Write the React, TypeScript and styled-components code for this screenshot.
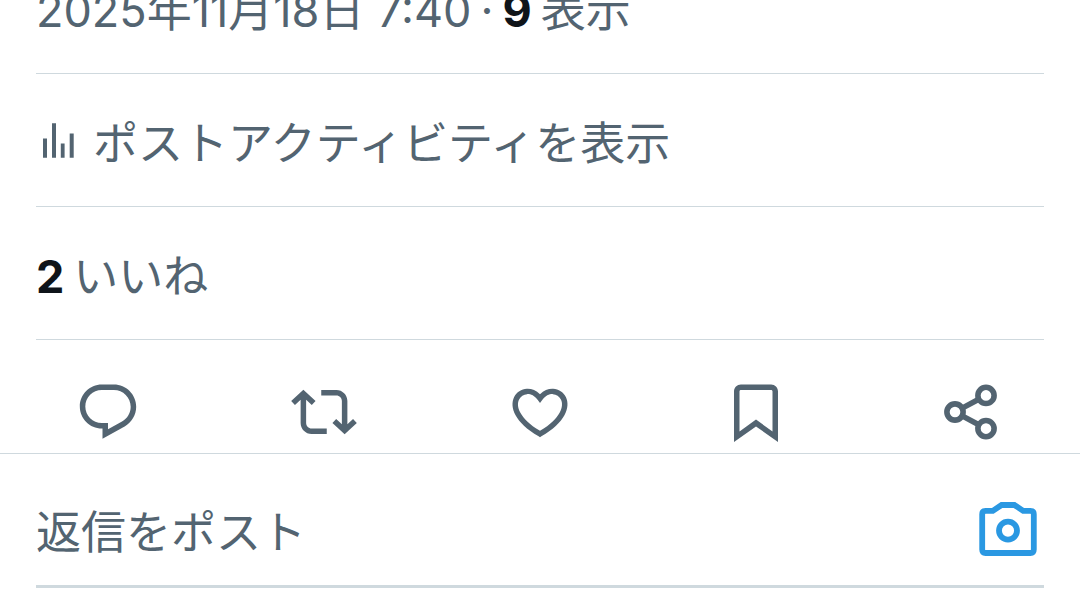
import React from "react";
import styled, { createGlobalStyle } from "styled-components";

const GlobalStyle = createGlobalStyle`
  * { box-sizing: border-box; }
  body {
    margin: 0;
    background: #fff;
    color: #536471;
    overflow-x: hidden;
  }
  body, button, input {
    font-family: Inter, "Noto Sans CJK JP", sans-serif;
    font-size: 45px;
    line-height: 60px;
  }
`;

const Section = styled.div`
  margin: 0 36px;
  padding: 40px 0 32px;
  border-bottom: 1px solid #cfd9de;
`;

const MetaSection = styled(Section)`
  margin-top: -19px;
  padding-top: 0;
`;

const Line = styled.p`
  display: flex;
  gap: 9px;
  margin: 0;
  white-space: nowrap;
`;

const Count = styled.strong`
  font-weight: 700;
  color: #0f1419;
`;

const ActivityLink = styled.a`
  display: flex;
  align-items: center;
  gap: 12px;
  color: inherit;
  text-decoration: none;
  white-space: nowrap;
`;

const Actions = styled.div`
  display: grid;
  grid-template-columns: repeat(5, 1fr);
  justify-items: center;
  padding: 39px 0 8px;
  border-bottom: 1px solid #cfd9de;
`;

const IconButton = styled.button<{ $accent?: boolean }>`
  display: flex;
  flex: none;
  padding: 0;
  border: 0;
  background: none;
  color: ${(p) => (p.$accent ? "#2a98e2" : "#536471")};
  cursor: pointer;
`;

const Icon = styled.svg<{ $size: number }>`
  display: block;
  flex: none;
  width: ${(p) => p.$size}px;
  height: ${(p) => p.$size}px;
  fill: currentColor;
`;

const ReplyForm = styled.form`
  display: flex;
  align-items: center;
  margin: 0 36px;
  padding: 44px 0 21px;
  border-bottom: 3px solid #cfd9de;
`;

const ReplyInput = styled.input`
  flex: 1;
  min-width: 0;
  height: 66px;
  padding: 2px 0 0;
  border: 0;
  outline: 0;
  background: none;
  color: #0f1419;
  &::placeholder {
    color: #536471;
    opacity: 1;
  }
`;

const CameraSlot = styled.div`
  margin-right: 3px;
`;

const actions = [
  {
    label: "返信",
    path: "M1.751 10c0-4.42 3.584-8 8.005-8h4.366c4.49 0 8.129 3.64 8.129 8.13 0 2.96-1.607 5.68-4.196 7.11l-8.054 4.46v-3.69h-.067c-4.49.1-8.183-3.51-8.183-8.01zm8.005-6c-3.317 0-6.005 2.69-6.005 6 0 3.37 2.77 6.08 6.138 6.01l.351-.01h1.761v2.3l5.087-2.81c1.951-1.08 3.163-3.13 3.163-5.36 0-3.39-2.744-6.13-6.129-6.13H9.756z",
  },
  {
    label: "リポスト",
    path: "M4.5 3.88l4.432 4.14-1.364 1.46L5.5 7.55V16c0 1.1.896 2 2 2H13v2H7.5c-2.209 0-4-1.79-4-4V7.55L1.432 9.48.068 8.02 4.5 3.88zM16.5 6H11V4h5.5c2.209 0 4 1.79 4 4v8.45l2.068-1.93 1.364 1.46-4.432 4.14-4.432-4.14 1.364-1.46 2.068 1.93V8c0-1.1-.896-2-2-2z",
  },
  {
    label: "いいね",
    path: "M16.697 5.5c-1.222-.06-2.679.51-3.89 2.16l-.805 1.09-.806-1.09C9.984 6.01 8.526 5.44 7.304 5.5c-1.243.07-2.349.78-2.91 1.91-.552 1.12-.633 2.78.479 4.82 1.074 1.97 3.257 4.27 7.129 6.61 3.87-2.34 6.052-4.64 7.126-6.61 1.111-2.04 1.03-3.7.477-4.82-.561-1.13-1.666-1.84-2.908-1.91zm4.187 7.69c-1.351 2.48-4.001 5.12-8.379 7.67l-.503.3-.504-.3c-4.379-2.55-7.029-5.19-8.382-7.67-1.36-2.5-1.41-4.86-.514-6.67.887-1.79 2.647-2.91 4.601-3.01 1.651-.09 3.368.56 4.798 2.01 1.429-1.45 3.146-2.1 4.796-2.01 1.954.1 3.714 1.22 4.601 3.01.896 1.81.846 4.17-.514 6.67z",
  },
  {
    label: "ブックマーク",
    path: "M4 4.5C4 3.12 5.119 2 6.5 2h11C18.881 2 20 3.12 20 4.5v18.44l-8-5.71-8 5.71V4.5zM6.5 4c-.276 0-.5.22-.5.5v14.56l6-4.29 6 4.29V4.5c0-.28-.224-.5-.5-.5h-11z",
  },
];

const BarsIcon = () => (
  <Icon $size={45} viewBox="0 4 45 45" aria-hidden="true">
    <path d="M7 20.5h4v19.2H7zM16 5.3h4v34.4h-4zM24.8 25.5h3.8v14.2h-3.8zM33.7 15.5h4v24.2h-4z" />
  </Icon>
);

const ShareIcon = () => (
  <Icon $size={66} viewBox="0 0 66 66" aria-hidden="true">
    <g fill="none" stroke="currentColor" strokeWidth="5.6">
      <path d="M23.2 29.1l16.6-8.9M23.2 36.9l16.6 8.9" />
      <circle cx="16" cy="33" r="8.1" />
      <circle cx="47" cy="16.4" r="8.1" />
      <circle cx="47" cy="49.6" r="8.1" />
    </g>
  </Icon>
);

const CameraIcon = () => (
  <Icon $size={66} viewBox="0 0 66 66" aria-hidden="true">
    <g fill="none" stroke="currentColor" strokeWidth="5.8">
      <path d="M10.6 12.8h7.2l8.8-5.8h12.8l8.8 5.8h7.2q3.4 0 3.4 3.4v35.4q0 3.4-3.4 3.4H10.6q-3.4 0-3.4-3.4V16.2q0-3.4 3.4-3.4z" />
      <circle cx="33" cy="32.6" r="9" />
    </g>
  </Icon>
);

export default function App() {
  return (
    <>
      <GlobalStyle />
      <main>
        <MetaSection>
          <Line>
            <time dateTime="2025-11-18T07:40">2025年11月18日 7:40</time>
            <span>·</span>
            <Count>9</Count>
            <span>表示</span>
          </Line>
        </MetaSection>
        <Section>
          <ActivityLink href="#activity">
            <BarsIcon />
            ポストアクティビティを表示
          </ActivityLink>
        </Section>
        <Section>
          <Line>
            <Count>2</Count>
            <span>いいね</span>
          </Line>
        </Section>
        <Actions>
          {actions.map((a) => (
            <IconButton key={a.label} type="button" aria-label={a.label}>
              <Icon $size={66} viewBox="0 0 24 24" aria-hidden="true">
                <path d={a.path} />
              </Icon>
            </IconButton>
          ))}
          <IconButton type="button" aria-label="共有">
            <ShareIcon />
          </IconButton>
        </Actions>
        <ReplyForm onSubmit={(e) => e.preventDefault()}>
          <ReplyInput type="text" aria-label="返信をポスト" placeholder="返信をポスト" />
          <CameraSlot>
            <IconButton type="button" $accent aria-label="写真を追加">
              <CameraIcon />
            </IconButton>
          </CameraSlot>
        </ReplyForm>
      </main>
    </>
  );
}
